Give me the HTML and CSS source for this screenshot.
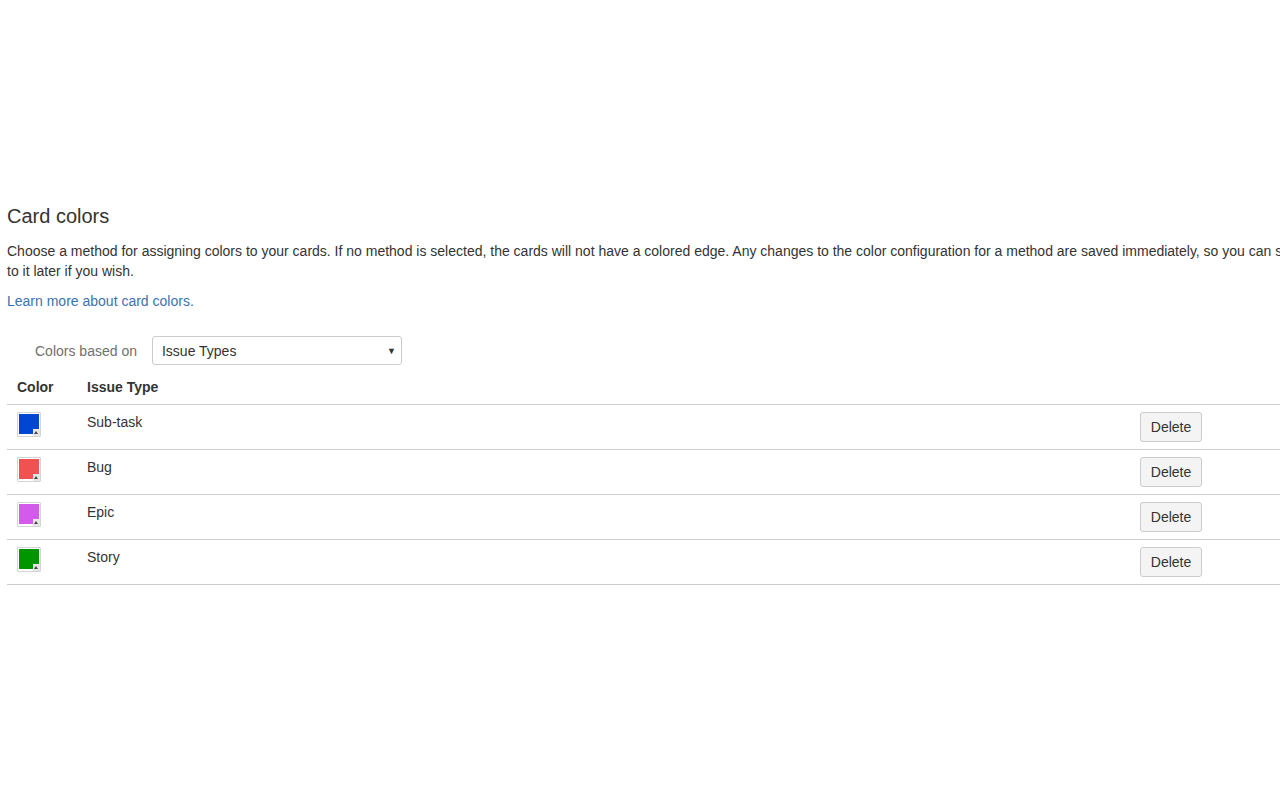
FILE: index.html
```html
<!DOCTYPE html>
<html>
<head>
<meta charset="utf-8">
<link rel="stylesheet" href="styles.css">
</head>
<body>
<div class="page">
  <h2 class="title">Card colors</h2>
  <p class="desc">Choose a method for assigning colors to your cards. If no method is selected, the cards will not have a colored edge. Any changes to the color configuration for a method are saved immediately, so you can switch back to it later if you wish.</p>
  <p class="more"><a href="#" class="link">Learn more about card colors.</a></p>
  <div class="field">
    <span class="label">Colors based on</span>
    <div class="select"><span>Issue Types</span><span class="arrow">▼</span></div>
  </div>
  <table class="colors">
    <thead>
      <tr><th class="c-color">Color</th><th>Issue Type</th><th class="c-act"></th></tr>
    </thead>
    <tbody>
      <tr><td><span class="swatch"><span class="fill" style="background:#0046d2"></span><span class="notch"></span></span></td><td>Sub-task</td><td><button class="btn">Delete</button></td></tr>
      <tr><td><span class="swatch"><span class="fill" style="background:#f15151"></span><span class="notch"></span></span></td><td>Bug</td><td><button class="btn">Delete</button></td></tr>
      <tr><td><span class="swatch"><span class="fill" style="background:#d459ed"></span><span class="notch"></span></span></td><td>Epic</td><td><button class="btn">Delete</button></td></tr>
      <tr><td><span class="swatch"><span class="fill" style="background:#009600"></span><span class="notch"></span></span></td><td>Story</td><td><button class="btn">Delete</button></td></tr>
    </tbody>
  </table>
</div>
</body>
</html>
```

FILE: styles.css
```css
html, body {
  margin: 0;
  padding: 0;
  overflow: hidden;
  background: #fff;
}
body {
  font-family: Arial, "Liberation Sans", sans-serif;
  font-size: 14px;
  line-height: 20px;
  color: #333;
}
.page {
  width: 1355px;
  padding: 201px 0 0 7px;
}
.title {
  font-size: 20px;
  font-weight: normal;
  line-height: 30px;
  margin: 0 0 10px;
  color: #333;
}
.desc {
  margin: 0 0 10px;
}
.more {
  margin: 0 0 25px;
}
.link {
  color: #3b73af;
  text-decoration: none;
}
.field {
  display: flex;
  align-items: center;
  padding-left: 28px;
  margin-bottom: 10px;
}
.label {
  color: #707070;
  margin-right: 15px;
}
.select {
  height: 27px;
  border: 1px solid #ccc;
  border-radius: 3px;
  display: flex;
  align-items: center;
  justify-content: space-between;
  padding: 0 5px 0 9px;
  box-sizing: content-box;
  width: 234px;
}
.arrow {
  font-size: 9px;
  color: #333;
}
.colors {
  width: 1355px;
  border-collapse: collapse;
}
.colors th {
  text-align: left;
  font-weight: bold;
  padding: 2px 10px 7px;
  border-bottom: 1px solid #ccc;
}
.colors td {
  padding: 7px 10px;
  vertical-align: top;
  border-bottom: 1px solid #ccc;
}
.c-color {
  width: 50px;
}
.c-act {
  width: 212px;
}
.swatch {
  display: block;
  position: relative;
  width: 22px;
  height: 23px;
  border: 1px solid #d4d4d4;
  border-radius: 1px;
}
.fill {
  position: absolute;
  left: 1px;
  top: 1px;
  width: 20px;
  height: 20px;
}
.notch {
  position: absolute;
  right: 0;
  bottom: 0;
  width: 7px;
  height: 7px;
  background: #e6e6e6;
}
.notch::after {
  content: "";
  position: absolute;
  left: 1px;
  top: 2px;
  border-left: 2.5px solid transparent;
  border-right: 2.5px solid transparent;
  border-bottom: 3px solid #444;
}
.btn {
  font-family: Arial, "Liberation Sans", sans-serif;
  font-size: 14px;
  color: #333;
  background: #f4f4f4;
  border: 1px solid #ccc;
  border-radius: 3px;
  height: 30px;
  width: 62px;
  padding: 0;
  display: block;
}
```
